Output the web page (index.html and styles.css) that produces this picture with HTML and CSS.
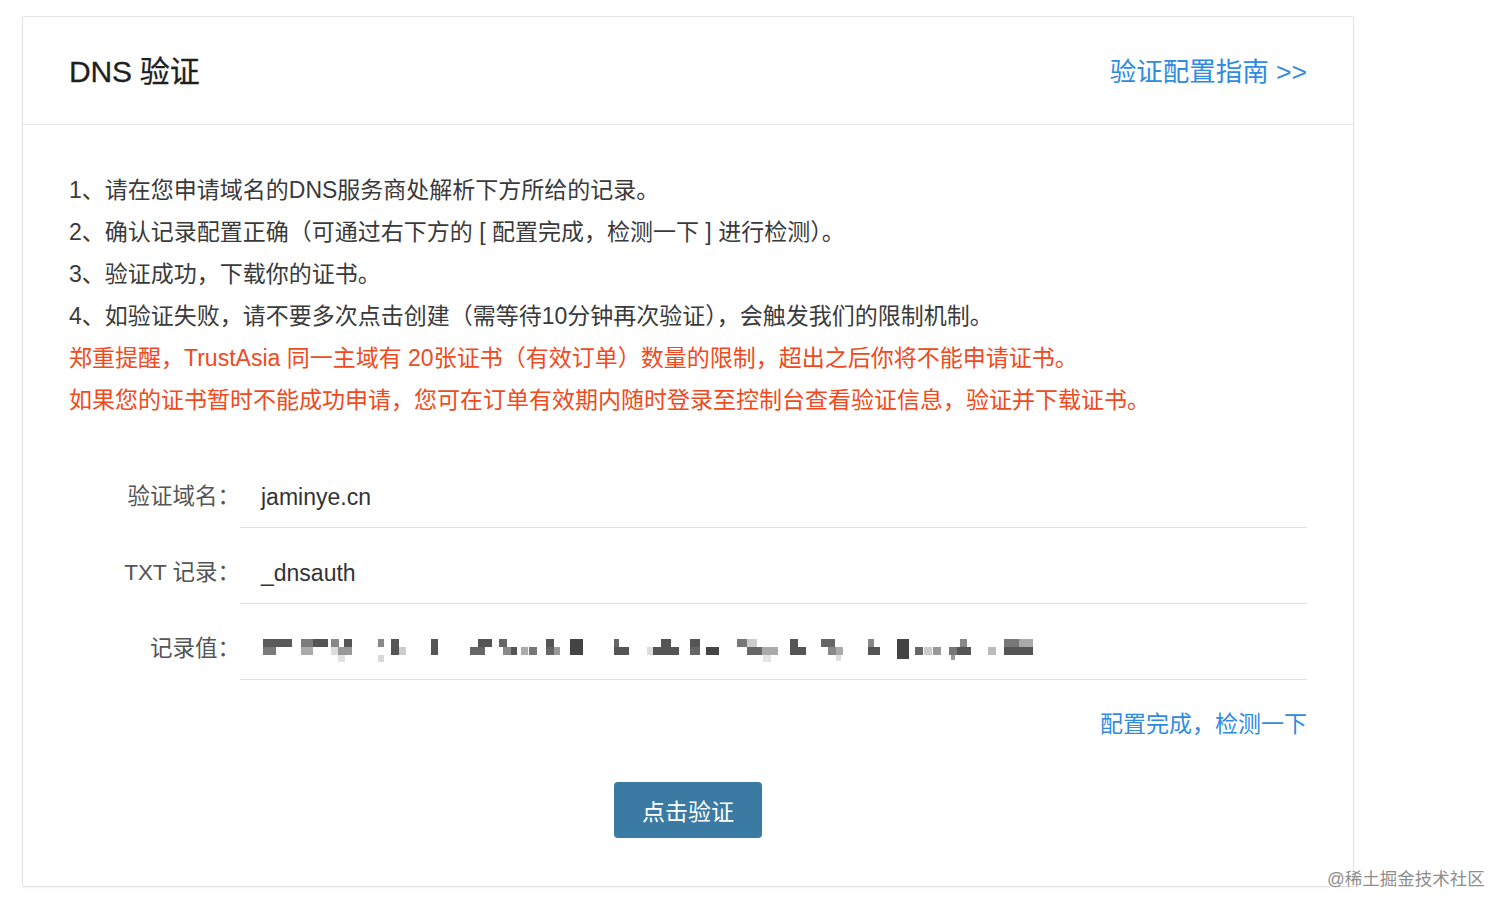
FILE: index.html
```html
<!DOCTYPE html>
<html lang="zh-CN">
<head>
<meta charset="utf-8">
<title>DNS 验证</title>
<link rel="stylesheet" href="styles.css">
</head>
<body>
<div class="card">
  <div class="card-header">
    <h2 class="title">DNS 验证</h2>
    <a class="guide-link" href="#">验证配置指南 &gt;&gt;</a>
  </div>
  <div class="card-body">
    <div class="steps">
      <p>1、请在您申请域名的DNS服务商处解析下方所给的记录。</p>
      <p>2、确认记录配置正确（可通过右下方的 [ 配置完成，检测一下 ] 进行检测）。</p>
      <p>3、验证成功，下载你的证书。</p>
      <p>4、如验证失败，请不要多次点击创建（需等待10分钟再次验证），会触发我们的限制机制。</p>
      <p class="warn">郑重提醒，TrustAsia 同一主域有 20张证书（有效订单）数量的限制，超出之后你将不能申请证书。</p>
      <p class="warn">如果您的证书暂时不能成功申请，您可在订单有效期内随时登录至控制台查看验证信息，验证并下载证书。</p>
    </div>
    <div class="form">
      <div class="row">
        <div class="label">验证域名：</div>
        <div class="value">jaminye.cn</div>
      </div>
      <div class="row">
        <div class="label">TXT 记录：</div>
        <div class="value">_dnsauth</div>
      </div>
      <div class="row">
        <div class="label">记录值：</div>
        <div class="value">
          <svg class="blur" width="772" height="26" viewBox="0 0 772 26" aria-hidden="true">
            <rect x="0" y="2" width="29" height="8" fill="#5a5a5a"/>
            <rect x="0" y="10" width="13" height="8" fill="#7a7a7a"/>
            <rect x="38" y="2" width="12" height="8" fill="#7c7c7c"/>
            <rect x="50" y="2" width="15" height="8" fill="#555"/>
            <rect x="38" y="10" width="12" height="8" fill="#aaa"/>
            <rect x="68" y="2" width="8" height="8" fill="#888"/>
            <rect x="81" y="2" width="8" height="8" fill="#555"/>
            <rect x="68" y="10" width="7" height="8" fill="#ddd"/>
            <rect x="75" y="10" width="14" height="8" fill="#999"/>
            <rect x="75" y="18" width="7" height="7" fill="#e2e2e2"/>
            <rect x="115" y="2" width="6" height="8" fill="#888"/>
            <rect x="115" y="18" width="6" height="7" fill="#d8d8d8"/>
            <rect x="128" y="2" width="8" height="16" fill="#555"/>
            <rect x="136" y="10" width="7" height="8" fill="#ccc"/>
            <rect x="168" y="2" width="7" height="16" fill="#555"/>
            <rect x="215" y="2" width="14" height="8" fill="#555"/>
            <rect x="207" y="10" width="15" height="8" fill="#666"/>
            <rect x="236" y="2" width="8" height="8" fill="#666"/>
            <rect x="240" y="10" width="8" height="8" fill="#888"/>
            <rect x="248" y="10" width="6" height="8" fill="#555"/>
            <rect x="258" y="10" width="7" height="8" fill="#aaa"/>
            <rect x="266" y="10" width="8" height="8" fill="#777"/>
            <rect x="283" y="2" width="8" height="8" fill="#555"/>
            <rect x="283" y="10" width="8" height="8" fill="#666"/>
            <rect x="291" y="10" width="6" height="8" fill="#999"/>
            <rect x="307" y="2" width="13" height="16" fill="#444"/>
            <rect x="351" y="2" width="5" height="8" fill="#666"/>
            <rect x="351" y="10" width="15" height="8" fill="#555"/>
            <rect x="398" y="2" width="10" height="8" fill="#555"/>
            <rect x="390" y="10" width="26" height="8" fill="#555"/>
            <rect x="384" y="10" width="6" height="8" fill="#ddd"/>
            <rect x="427" y="2" width="10" height="8" fill="#555"/>
            <rect x="427" y="10" width="10" height="8" fill="#666"/>
            <rect x="443" y="10" width="13" height="8" fill="#444"/>
            <rect x="474" y="2" width="10" height="8" fill="#777"/>
            <rect x="484" y="2" width="10" height="8" fill="#ccc"/>
            <rect x="484" y="10" width="15" height="8" fill="#666"/>
            <rect x="499" y="10" width="16" height="8" fill="#aaa"/>
            <rect x="500" y="18" width="8" height="7" fill="#e5e5e5"/>
            <rect x="527" y="2" width="8" height="16" fill="#555"/>
            <rect x="535" y="10" width="8" height="8" fill="#555"/>
            <rect x="558" y="2" width="14" height="8" fill="#666"/>
            <rect x="565" y="10" width="8" height="8" fill="#888"/>
            <rect x="573" y="10" width="7" height="8" fill="#aaa"/>
            <rect x="573" y="18" width="5" height="6" fill="#ddd"/>
            <rect x="605" y="2" width="6" height="8" fill="#888"/>
            <rect x="605" y="10" width="12" height="8" fill="#555"/>
            <rect x="634" y="2" width="12" height="20" fill="#444"/>
            <rect x="652" y="10" width="8" height="8" fill="#666"/>
            <rect x="661" y="10" width="8" height="8" fill="#ccc"/>
            <rect x="670" y="10" width="8" height="8" fill="#999"/>
            <rect x="686" y="10" width="8" height="8" fill="#777"/>
            <rect x="697" y="2" width="7" height="8" fill="#888"/>
            <rect x="694" y="10" width="14" height="8" fill="#555"/>
            <rect x="688" y="18" width="4" height="5" fill="#999"/>
            <rect x="725" y="10" width="8" height="8" fill="#bbb"/>
            <rect x="741" y="2" width="15" height="8" fill="#777"/>
            <rect x="756" y="2" width="14" height="8" fill="#aaa"/>
            <rect x="741" y="10" width="29" height="8" fill="#555"/>
          </svg>
        </div>
      </div>
    </div>
    <div class="check">
      <a class="check-link" href="#">配置完成，检测一下</a>
    </div>
    <div class="actions">
      <button class="btn-primary" type="button">点击验证</button>
    </div>
  </div>
</div>
<div class="watermark">@稀土掘金技术社区</div>
</body>
</html>
```

FILE: styles.css
```css
html, body {
  margin: 0;
  padding: 0;
  background: #fff;
}
body {
  padding: 16px 0 0 22px;
  font-family: "Liberation Sans", "Noto Sans CJK SC", sans-serif;
  color: #333;
  position: relative;
  min-height: 897px;
}
.card {
  width: 1330px;
  border: 1px solid #e4e4e4;
  border-radius: 2px;
  box-shadow: 0 1px 2px rgba(0, 0, 0, 0.06);
  background: #fff;
}
.card-header {
  height: 107px;
  border-bottom: 1px solid #e4e4e4;
  display: flex;
  align-items: center;
  justify-content: space-between;
  padding: 0 46px 0 46px;
}
.title {
  margin: -3px 0 0 0;
  font-size: 30px;
  font-weight: normal;
  color: #1f1f1f;
  letter-spacing: -0.2px;
  -webkit-text-stroke: 0.3px #1f1f1f;
}
.guide-link {
  font-size: 26.5px;
  color: #2f8be0;
  text-decoration: none;
  margin-top: -2px;
}
.card-body {
  padding: 44px 46px 48px 46px;
}
.steps p {
  margin: 0;
  font-size: 23px;
  line-height: 42px;
  color: #3a3a3a;
  white-space: nowrap;
}
.steps p.warn {
  color: #ef4a20;
}
.form {
  margin-top: 31px;
}
.row {
  display: flex;
  align-items: stretch;
}
.label {
  width: 171px;
  flex: none;
  text-align: right;
  font-size: 22.5px;
  color: #555;
  padding-top: 30px;
  line-height: 30px;
}
.value {
  flex: 1;
  padding: 30px 0 15px 21px;
  line-height: 30px;
  height: 30px;
  font-size: 23px;
  color: #333;
  border-bottom: 1px solid #e2e2e2;
}
.blur {
  display: block;
  margin-top: 3px;
  margin-left: 2px;
}
.check {
  display: flex;
  justify-content: flex-end;
  margin-top: 29px;
}
.check-link {
  font-size: 23px;
  line-height: 30px;
  color: #2f8be0;
  text-decoration: none;
}
.actions {
  display: flex;
  justify-content: center;
  margin-top: 43px;
}
.btn-primary {
  width: 148px;
  height: 56px;
  border: none;
  border-radius: 4px;
  background: #3a7aa3;
  color: #fff;
  font-family: "Liberation Sans", "Noto Sans CJK SC", sans-serif;
  font-size: 23px;
  cursor: pointer;
  padding: 0;
}
.watermark {
  position: absolute;
  left: 1327px;
  top: 865px;
  font-size: 17.5px;
  color: rgba(110, 110, 110, 0.8);
  text-shadow: 0 0 1px #fff;
}
```
